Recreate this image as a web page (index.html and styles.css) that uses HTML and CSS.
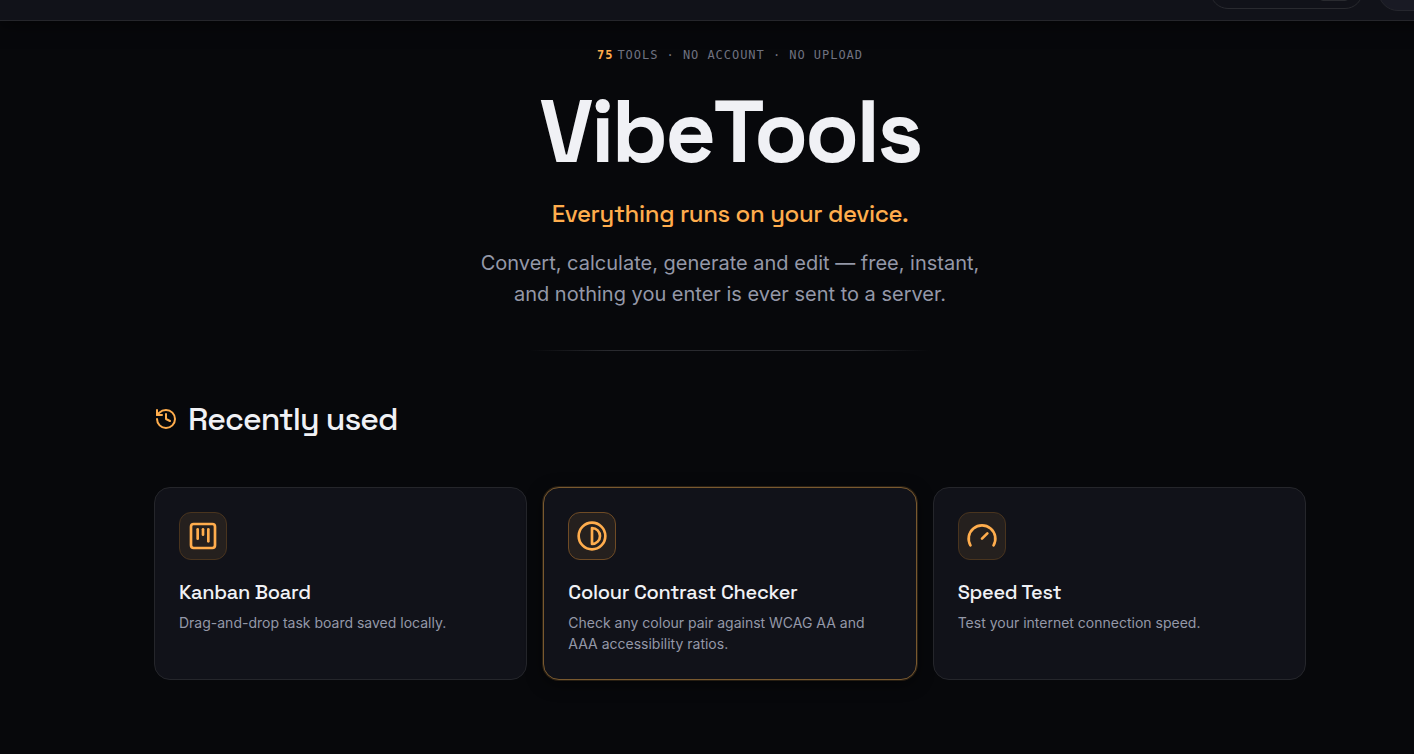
FILE: index.html
```html
<!DOCTYPE html>
<html lang="en">
<head>
    <meta charset="UTF-8">
    <meta name="viewport" content="width=device-width, initial-scale=1.0">
    <link rel="stylesheet" href="styles.css">
    <title>VibeTools</title>
</head>
<body>
    <header class="topbar">
        <button class="search-button" type="button" aria-label="Search"><kbd class="search-key"></kbd></button>
        <button class="menu-button" type="button" aria-label="Menu"></button>
    </header>

    <main class="page">
        <section class="hero">
            <p class="eyebrow"><strong>75</strong><span>TOOLS · NO ACCOUNT · NO UPLOAD</span></p>
            <h1>VibeTools</h1>
            <p class="tagline">Everything runs on your device.</p>
            <p class="lead">Convert, calculate, generate and edit — free, instant, and nothing you enter is ever sent to a server.</p>
            <hr class="divider">
        </section>

        <section class="recent">
            <h2>
                <svg class="icon" width="24" height="24" viewBox="0 0 24 24" aria-hidden="true">
                    <path d="M3 12a9 9 0 1 0 9-9 9.75 9.75 0 0 0-6.74 2.74L3 8"/>
                    <path d="M3 3v5h5"/>
                    <path d="M12 7v5l4 2"/>
                </svg>
                Recently used
            </h2>
            <div class="cards">
                <a class="card" href="#kanban">
                    <span class="card-icon">
                        <svg class="icon" width="32" height="32" viewBox="0 0 24 24" aria-hidden="true">
                            <rect x="3" y="3" width="18" height="18" rx="2"/>
                            <path d="M8 7v7"/>
                            <path d="M12 7v4"/>
                            <path d="M16 7v9"/>
                        </svg>
                    </span>
                    <h3>Kanban Board</h3>
                    <p>Drag-and-drop task board saved locally.</p>
                </a>
                <a class="card card-active" href="#contrast">
                    <span class="card-icon">
                        <svg class="icon" width="32" height="32" viewBox="0 0 24 24" aria-hidden="true">
                            <circle cx="12" cy="12" r="10"/>
                            <path d="M12 18a6 6 0 0 0 0-12v12z"/>
                        </svg>
                    </span>
                    <h3>Colour Contrast Checker</h3>
                    <p>Check any colour pair against WCAG AA and AAA accessibility ratios.</p>
                </a>
                <a class="card" href="#speed">
                    <span class="card-icon">
                        <svg class="icon" width="32" height="32" viewBox="0 0 24 24" aria-hidden="true">
                            <path d="m12 14 4-4"/>
                            <path d="M3.34 19a10 10 0 1 1 17.32 0"/>
                        </svg>
                    </span>
                    <h3>Speed Test</h3>
                    <p>Test your internet connection speed.</p>
                </a>
            </div>
        </section>
    </main>
</body>
</html>
```
FILE: styles.css
```css
* {
    box-sizing: border-box;
}

body {
    margin: 0;
    min-height: 100vh;
    display: flex;
    flex-direction: column;
    overflow: hidden;
    background-color: #07080b;
    color: #f0f1f5;
    font-family: "Space Grotesk", Inter, sans-serif;
}

h1, h2, h3, p {
    margin: 0;
}

.icon {
    fill: none;
    stroke: #ffad4d;
    stroke-width: 2;
    stroke-linecap: round;
    stroke-linejoin: round;
}

/* bar is scrolled partly out of view */
.topbar {
    display: flex;
    align-items: center;
    justify-content: flex-end;
    gap: 15px;
    height: 59px;
    margin-top: -38px;
    margin-right: -44px;
    background-color: #111219;
    border-bottom: 1px solid #25262b;
    box-shadow: 0 4px 16px rgba(0, 0, 0, 0.5);
}

.search-button {
    display: flex;
    align-items: center;
    justify-content: flex-end;
    width: 153px;
    height: 36px;
    padding: 0 13px;
    border: 1px solid #292a2f;
    border-radius: 18px;
    background-color: #111219;
}

.search-key {
    width: 30px;
    height: 20px;
    border: 1px solid #292a2f;
    border-radius: 4px;
}

.menu-button {
    width: 80px;
    height: 40px;
    border: 1px solid #25262d;
    border-radius: 20px;
    background-color: #191a24;
}

.page {
    width: 100%;
    padding: 24px 108px 74px 154px;
}

.hero {
    display: flex;
    flex-direction: column;
    align-items: center;
    text-align: center;
}

.eyebrow {
    display: flex;
    gap: 4px;
    font-family: "DejaVu Sans Mono", monospace;
    font-size: 12px;
    line-height: 20px;
    letter-spacing: 0.08em;
    color: #6f7280;
}

.eyebrow strong {
    color: #ffad4d;
}

h1 {
    margin-top: 23px;
    font-size: 88px;
    font-weight: 700;
    line-height: 88px;
    letter-spacing: -0.03em;
}

.tagline {
    margin-top: 22px;
    font-size: 24px;
    font-weight: 500;
    line-height: 32px;
    letter-spacing: -0.015em;
    color: #ffad4d;
}

.lead {
    max-width: 520px;
    margin-top: 18px;
    font-family: Inter, sans-serif;
    font-size: 20px;
    line-height: 31px;
    color: #9498a8;
}

.divider {
    width: 400px;
    height: 1px;
    margin: 40px 0 0;
    border: none;
    background: linear-gradient(to right, transparent, #292a2f 20%, #292a2f 80%, transparent);
}

.recent {
    margin-top: 48px;
}

h2 {
    display: flex;
    align-items: center;
    gap: 10px;
    font-size: 32px;
    font-weight: 500;
    line-height: 40px;
    letter-spacing: -0.03em;
}

.cards {
    display: grid;
    grid-template-columns: repeat(3, 1fr);
    gap: 16px;
    margin-top: 48px;
}

.card {
    display: flex;
    flex-direction: column;
    min-height: 193px;
    padding: 24px;
    border: 1px solid #25262b;
    border-radius: 16px;
    background-color: #111219;
    color: inherit;
    text-decoration: none;
}

.card-active {
    border-color: #79592f;
    box-shadow: 0 0 0 1px rgba(121, 89, 47, 0.3), 0 4px 16px rgba(0, 0, 0, 0.5);
}

.card-icon {
    display: flex;
    align-items: center;
    justify-content: center;
    width: 48px;
    height: 48px;
    border: 1px solid #49341e;
    border-radius: 12px;
    background-color: #25201e;
}

.card-active .card-icon {
    border-color: #6f4b25;
}

h3 {
    margin-top: 19px;
    font-size: 20px;
    font-weight: 500;
    line-height: 26px;
    letter-spacing: -0.015em;
}

.card p {
    margin-top: 7px;
    font-family: Inter, sans-serif;
    font-size: 14px;
    line-height: 21px;
    color: #9498a8;
}
```
